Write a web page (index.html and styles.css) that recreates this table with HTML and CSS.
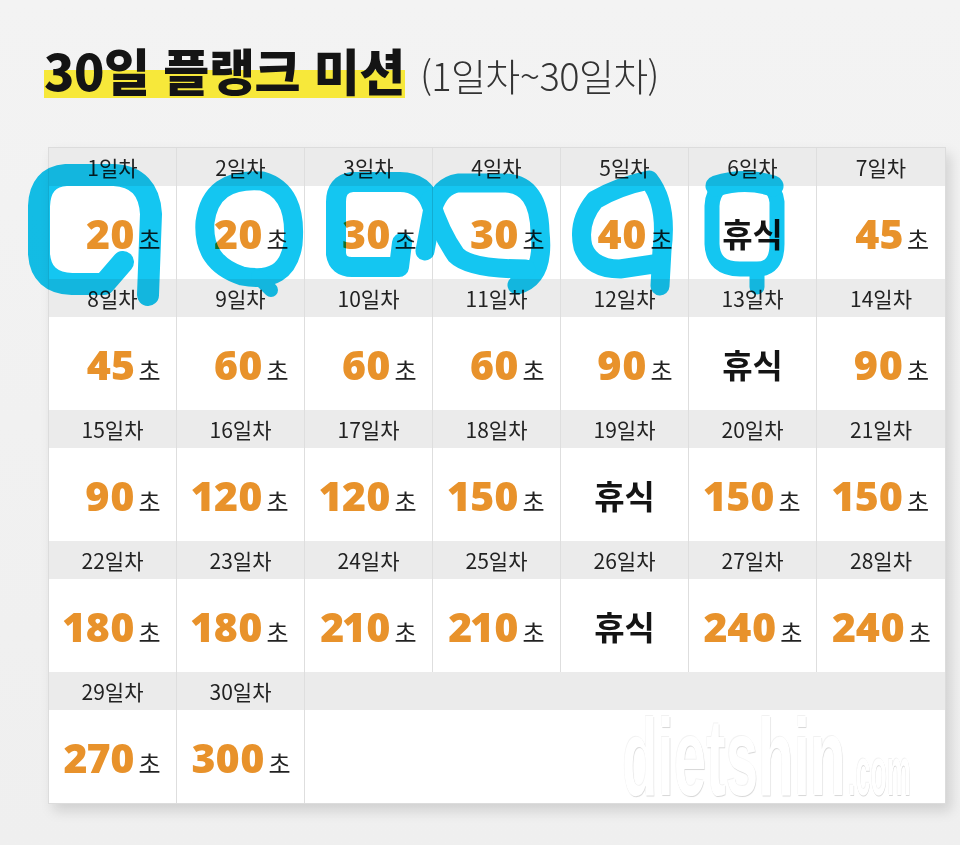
FILE: index.html
```html
<!DOCTYPE html>
<html lang="ko">
<head>
<meta charset="utf-8">
<title>30일 플랭크 미션</title>
<link rel="stylesheet" href="styles.css">
</head>
<body>
<div class="page">
  <h1 class="title"><span class="hl">30일 플랭크 미션</span><span class="sub">(1일차~30일차)</span></h1>

  <div class="table">
    <div class="cell"><div class="hd">1일차</div><div class="val"><span class="amt"><span class="n">20</span><span class="u">초</span></span></div></div>
    <div class="cell"><div class="hd">2일차</div><div class="val"><span class="amt"><span class="n">20</span><span class="u">초</span></span></div></div>
    <div class="cell"><div class="hd">3일차</div><div class="val"><span class="amt"><span class="n">30</span><span class="u">초</span></span></div></div>
    <div class="cell"><div class="hd">4일차</div><div class="val"><span class="amt"><span class="n">30</span><span class="u">초</span></span></div></div>
    <div class="cell"><div class="hd">5일차</div><div class="val"><span class="amt"><span class="n">40</span><span class="u">초</span></span></div></div>
    <div class="cell"><div class="hd">6일차</div><div class="val"><span class="rest">휴식</span></div></div>
    <div class="cell"><div class="hd">7일차</div><div class="val"><span class="amt"><span class="n">45</span><span class="u">초</span></span></div></div>

    <div class="cell"><div class="hd">8일차</div><div class="val"><span class="amt"><span class="n">45</span><span class="u">초</span></span></div></div>
    <div class="cell"><div class="hd">9일차</div><div class="val"><span class="amt"><span class="n">60</span><span class="u">초</span></span></div></div>
    <div class="cell"><div class="hd">10일차</div><div class="val"><span class="amt"><span class="n">60</span><span class="u">초</span></span></div></div>
    <div class="cell"><div class="hd">11일차</div><div class="val"><span class="amt"><span class="n">60</span><span class="u">초</span></span></div></div>
    <div class="cell"><div class="hd">12일차</div><div class="val"><span class="amt"><span class="n">90</span><span class="u">초</span></span></div></div>
    <div class="cell"><div class="hd">13일차</div><div class="val"><span class="rest">휴식</span></div></div>
    <div class="cell"><div class="hd">14일차</div><div class="val"><span class="amt"><span class="n">90</span><span class="u">초</span></span></div></div>

    <div class="cell"><div class="hd">15일차</div><div class="val"><span class="amt"><span class="n">90</span><span class="u">초</span></span></div></div>
    <div class="cell"><div class="hd">16일차</div><div class="val"><span class="amt"><span class="n">120</span><span class="u">초</span></span></div></div>
    <div class="cell"><div class="hd">17일차</div><div class="val"><span class="amt"><span class="n">120</span><span class="u">초</span></span></div></div>
    <div class="cell"><div class="hd">18일차</div><div class="val"><span class="amt"><span class="n">150</span><span class="u">초</span></span></div></div>
    <div class="cell"><div class="hd">19일차</div><div class="val"><span class="rest">휴식</span></div></div>
    <div class="cell"><div class="hd">20일차</div><div class="val"><span class="amt"><span class="n">150</span><span class="u">초</span></span></div></div>
    <div class="cell"><div class="hd">21일차</div><div class="val"><span class="amt"><span class="n">150</span><span class="u">초</span></span></div></div>

    <div class="cell"><div class="hd">22일차</div><div class="val"><span class="amt"><span class="n">180</span><span class="u">초</span></span></div></div>
    <div class="cell"><div class="hd">23일차</div><div class="val"><span class="amt"><span class="n">180</span><span class="u">초</span></span></div></div>
    <div class="cell"><div class="hd">24일차</div><div class="val"><span class="amt"><span class="n">210</span><span class="u">초</span></span></div></div>
    <div class="cell"><div class="hd">25일차</div><div class="val"><span class="amt"><span class="n">210</span><span class="u">초</span></span></div></div>
    <div class="cell"><div class="hd">26일차</div><div class="val"><span class="rest">휴식</span></div></div>
    <div class="cell"><div class="hd">27일차</div><div class="val"><span class="amt"><span class="n">240</span><span class="u">초</span></span></div></div>
    <div class="cell"><div class="hd">28일차</div><div class="val"><span class="amt"><span class="n">240</span><span class="u">초</span></span></div></div>

    <div class="cell"><div class="hd">29일차</div><div class="val"><span class="amt"><span class="n">270</span><span class="u">초</span></span></div></div>
    <div class="cell"><div class="hd">30일차</div><div class="val"><span class="amt"><span class="n">300</span><span class="u">초</span></span></div></div>
    <div class="cell empty"><div class="hd"></div><div class="val"></div></div>
    <div class="cell empty"><div class="hd"></div><div class="val"></div></div>
    <div class="cell empty"><div class="hd"></div><div class="val"></div></div>
    <div class="cell empty"><div class="hd"></div><div class="val"></div></div>
    <div class="cell empty"><div class="hd"></div><div class="val"></div></div>
  </div>

  <div class="watermark"><span class="wm-main">dietshin</span><span class="wm-com">.com</span></div>

  <svg class="scribble" width="960" height="845" viewBox="0 0 960 845" aria-hidden="true">
    <g fill="none" stroke="#14c6f1" stroke-linecap="round" stroke-linejoin="round">
      <!-- col 1 -->
      <path stroke-width="22" d="M148 295 L151 214 Q149 177 114 175 L66 175 Q40 177 39 206 L39 254 Q41 283 72 284 L104 284 L123 262"/>
      <!-- col 2 -->
      <path stroke-width="19" d="M262 181 Q211 177 205 222 Q202 263 242 276 Q287 285 293 244 Q298 191 262 181 Z"/>
      <path stroke-width="14" d="M258 277 L271 290"/>
      <!-- col 3 -->
      <path stroke-width="20" d="M432 206 Q424 182 400 182 L352 182 Q336 184 336 202 L336 254 Q338 267 352 267 L399 267 L402 243"/>
      <!-- col 4 -->
      <path stroke-width="19" d="M517 285 Q545 277 540 232 Q539 185 506 183 L458 183 Q440 186 433 208 L425 251"/>
      <path stroke-width="19" d="M430 200 Q440 232 456 255 Q470 269 526 269"/>
      <!-- col 5 -->
      <path stroke-width="19" d="M660 286 L662 250 Q668 204 649 180 Q619 186 595 200 Q577 222 583 247 Q591 269 620 269 L660 263"/>
      <!-- col 6 -->
      <path stroke-width="15" d="M757 287 L757 269 Q777 269 777 244 L777 202 Q775 180 745 180 Q713 180 712 206 L712 244 Q713 269 740 269 L757 269"/>
      <path stroke-width="21" d="M716 186 Q745 177 773 186"/>
    </g>
  </svg>
</div>
</body>
</html>
```

FILE: styles.css
```css
* { box-sizing: border-box; }

html, body {
  margin: 0;
  padding: 0;
  background: #f1f1f1;
}

body {
  font-family: "Noto Sans CJK KR", "Noto Sans", sans-serif;
  color: #222;
}

.page {
  position: relative;
  width: 960px;
  height: 845px;
  overflow: hidden;
  padding-top: 39px;
  background: linear-gradient(#f3f3f3, #efefef);
}

.title {
  margin: 0 0 0 44px;
  height: 60px;
  font-size: 50px;
  line-height: 1.2;
  font-weight: 900;
  color: #141414;
  letter-spacing: -0.4px;
  white-space: nowrap;
}

.hl {
  background-image: linear-gradient(#f7e83a, #f7e83a);
  background-repeat: no-repeat;
  background-size: 100% 28px;
  background-position: left 0 bottom 7px;
}

.sub {
  margin-left: 15px;
  font-size: 38px;
  font-weight: 300;
  letter-spacing: -0.6px;
  color: #333;
}

.table {
  margin: 48px 0 0 48px;
  width: 898px;
  display: grid;
  grid-template-columns: repeat(7, 1fr);
  border: 1px solid #dcdcdc;
  background: #fff;
  box-shadow: 5px 7px 12px rgba(0, 0, 0, 0.13);
}

.cell {
  display: flex;
  flex-direction: column;
  border-right: 1px solid #dedede;
}

.cell:nth-child(7n),
.cell.empty {
  border-right: none;
}

.hd {
  height: 38px;
  display: flex;
  align-items: center;
  justify-content: center;
  background: #ebebeb;
  font-size: 21px;
  color: #222;
}

.val {
  height: 93px;
  display: flex;
  align-items: center;
  justify-content: center;
  background: #fff;
}

.amt {
  width: 98px;
  text-align: right;
  white-space: nowrap;
  padding-right: 1px;
}

.n {
  font-family: "Open Sans", "Noto Sans", sans-serif;
  font-weight: 800;
  font-size: 41px;
  color: #e8922b;
  letter-spacing: -0.5px;
  font-variant-numeric: proportional-nums;
}

.u {
  margin-left: 4px;
  font-size: 24px;
  color: #222;
}

.rest {
  font-size: 33px;
  font-weight: 700;
  color: #141414;
}

.watermark {
  position: absolute;
  left: 0;
  top: 0;
  font-family: "Liberation Sans", Arial, sans-serif;
  font-weight: 700;
  color: #ffffff;
  line-height: 1;
}

.wm-main,
.wm-com {
  position: absolute;
  white-space: nowrap;
  transform-origin: left top;
  text-shadow: 1px 1px 1px rgba(0, 0, 0, 0.16), -1px -1px 1px rgba(0, 0, 0, 0.06);
}

.wm-main {
  left: 622px;
  top: 702px;
  font-size: 110px;
  transform: scaleX(0.53);
}

.wm-com {
  left: 848px;
  top: 737px;
  font-size: 69px;
  transform: scaleX(0.39);
}

.scribble {
  position: absolute;
  left: 0;
  top: 0;
  mix-blend-mode: multiply;
  pointer-events: none;
}
```
